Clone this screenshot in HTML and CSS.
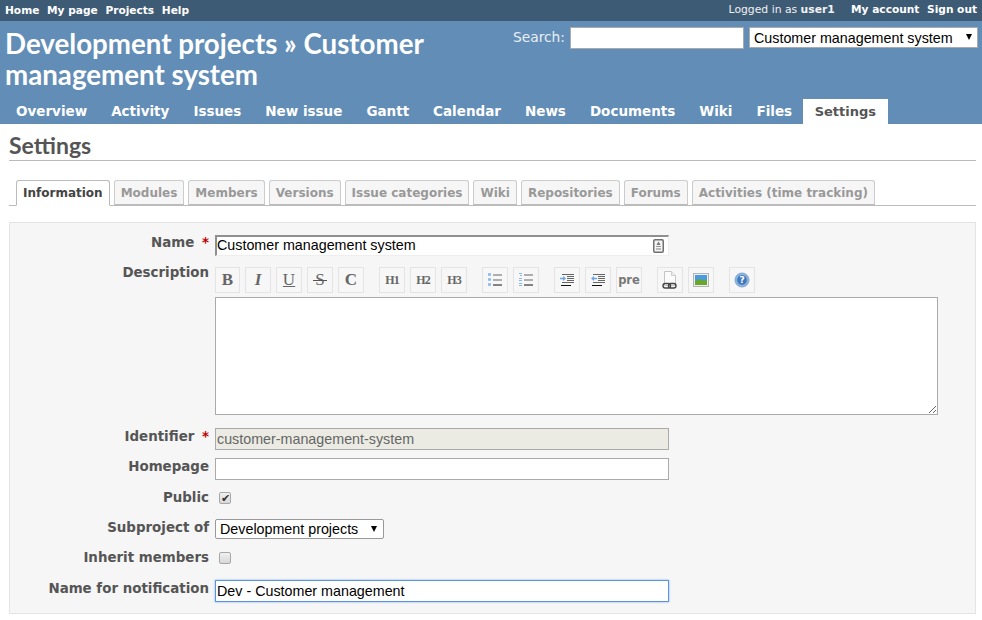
FILE: index.html
```html
<!DOCTYPE html>
<html>

<head>
    <title>Settings - Customer management system</title>
    <link rel="stylesheet" href="styles.css">
</head>

<body>
    <div id="top-menu">
        <div class="top-links">
            <a>Home</a>
            <a>My page</a>
            <a>Projects</a>
            <a>Help</a>
        </div>
        <div class="top-links">
            <span class="logged">Logged in as <b>user1</b></span>
            <a>My account</a>
            <a>Sign out</a>
        </div>
    </div>

    <div id="header">
        <div id="header-top">
            <h1 id="title">Development projects » Customer management system</h1>
            <div id="quick-search">
                <label>Search:</label>
                <input type="text" class="search-input" />
                <div class="select-wrap project-jump">
                    <select>
                        <option>Customer management system</option>
                    </select>
                </div>
            </div>
        </div>
        <div id="main-menu">
            <a>Overview</a>
            <a>Activity</a>
            <a>Issues</a>
            <a>New issue</a>
            <a>Gantt</a>
            <a>Calendar</a>
            <a>News</a>
            <a>Documents</a>
            <a>Wiki</a>
            <a>Files</a>
            <a class="selected">Settings</a>
        </div>
    </div>

    <div id="content">
        <h2>Settings</h2>

        <div class="tabs">
            <a class="selected">Information</a>
            <a>Modules</a>
            <a>Members</a>
            <a>Versions</a>
            <a>Issue categories</a>
            <a>Wiki</a>
            <a>Repositories</a>
            <a>Forums</a>
            <a>Activities (time tracking)</a>
        </div>

        <div class="box">
            <div class="row row-name">
                <label>Name <span class="required">*</span></label>
                <div class="name-wrap">
                    <input type="text" class="field inset" value="Customer management system" />
                    <svg class="field-icon" width="11" height="14" viewBox="0 0 11 14">
                        <rect x="0.75" y="0.75" width="9.5" height="12.5" rx="1.2" fill="#f4f4f4" stroke="#707070" stroke-width="1.5" />
                        <path d="M5.5 2.5 L7.5 6 H3.5 Z" fill="#777" />
                        <rect x="3" y="7" width="5" height="1" fill="#999" />
                        <rect x="3" y="9" width="5" height="2" fill="#bbb" />
                    </svg>
                </div>
            </div>

            <div class="row row-desc">
                <label>Description</label>
                <div class="editor">
                    <div class="toolbar">
                        <div class="tool-group">
                            <button class="tool tool-first serif"><b>B</b></button>
                            <button class="tool serif"><b><i>I</i></b></button>
                            <button class="tool serif under">U</button>
                            <button class="tool serif strike">S</button>
                            <button class="tool serif"><b>C</b></button>
                        </div>
                        <div class="tool-group">
                            <button class="tool serif small">H1</button>
                            <button class="tool serif small">H2</button>
                            <button class="tool serif small">H3</button>
                        </div>
                        <div class="tool-group">
                            <button class="tool">
                                <svg width="16" height="16" viewBox="0 0 16 16">
                                    <path d="M1 2.5h3M1 7.5h3M1 12.5h3" stroke="#8ab8ee" stroke-width="2.4" />
                                    <path d="M6 3h9" stroke="#666" />
                                    <path d="M6 8h9" stroke="#666" />
                                    <path d="M6 13h9" stroke="#111" />
                                </svg>
                            </button>
                            <button class="tool">
                                <svg width="16" height="16" viewBox="0 0 16 16">
                                    <path d="M1 1h3v1H1zM2 3h2v1H2zM1 6h3v1H1zM1 8h3v1H1zM1 11h3v1H1zM1 13h3v1H1z" fill="#8ab8ee" />
                                    <path d="M6 3h9" stroke="#666" />
                                    <path d="M6 8h9" stroke="#666" />
                                    <path d="M6 13h9" stroke="#111" />
                                </svg>
                            </button>
                        </div>
                        <div class="tool-group">
                            <button class="tool">
                                <svg width="16" height="16" viewBox="0 0 16 16">
                                    <path d="M3 2.5h12M8 4.5h7M8 6.5h7M8 8.5h7M3 10.5h12" stroke="#666" />
                                    <path d="M2 13.5h10" stroke="#111" />
                                    <path d="M1 6.5h3" stroke="#6aa6e6" stroke-width="1.5" />
                                    <path d="M4 4 L7 6.5 L4 9 Z" fill="#6aa6e6" />
                                </svg>
                            </button>
                            <button class="tool">
                                <svg width="16" height="16" viewBox="0 0 16 16">
                                    <path d="M3 2.5h12M8 4.5h7M8 6.5h7M8 8.5h7M3 10.5h12" stroke="#666" />
                                    <path d="M2 13.5h10" stroke="#111" />
                                    <path d="M4 6.5h3" stroke="#6aa6e6" stroke-width="1.5" />
                                    <path d="M4 4 L1 6.5 L4 9 Z" fill="#6aa6e6" />
                                </svg>
                            </button>
                            <button class="tool pre">pre</button>
                        </div>
                        <div class="tool-group">
                            <button class="tool">
                                <svg width="18" height="20" viewBox="0 0 18 20">
                                    <path d="M3.5 1.5h7l4 4v10h-11z" fill="#fbfbfb" stroke="#c4c4c4" />
                                    <path d="M10.5 1.5v4h4" fill="#eee" stroke="#d0d0d0" />
                                    <rect x="2" y="13.5" width="7.5" height="4.5" rx="2.2" fill="none" stroke="#444" stroke-width="1.4" />
                                    <rect x="7.5" y="13.5" width="7.5" height="4.5" rx="2.2" fill="none" stroke="#444" stroke-width="1.4" />
                                </svg>
                            </button>
                            <button class="tool">
                                <svg width="16" height="14" viewBox="0 0 16 14">
                                    <rect x="0.5" y="0.5" width="15" height="13" fill="#eee" stroke="#b4b4b4" />
                                    <rect x="2" y="2" width="12" height="10" fill="#4a9ade" />
                                    <path d="M2 8 Q6 5 9 7 T14 6 V12 H2 Z" fill="#6aa62a" />
                                </svg>
                            </button>
                        </div>
                        <div class="tool-group">
                            <button class="tool help">
                                <svg width="16" height="16" viewBox="0 0 16 16">
                                    <circle cx="8" cy="8" r="7" fill="#8db2e0" stroke="#86a6d0" />
                                    <circle cx="8" cy="8" r="4.8" fill="#3f78bd" />
                                    <text x="8" y="11" class="help-mark">?</text>
                                </svg>
                            </button>
                        </div>
                    </div>
                    <textarea class="desc-text"></textarea>
                </div>
            </div>

            <div class="row row-ident">
                <label>Identifier <span class="required">*</span></label>
                <input type="text" class="field disabled" value="customer-management-system" />
            </div>

            <div class="row row-home">
                <label>Homepage</label>
                <input type="text" class="field" />
            </div>

            <div class="row row-public">
                <label>Public</label>
                <input type="checkbox" class="check" checked />
            </div>

            <div class="row row-parent">
                <label>Subproject of</label>
                <div class="select-wrap parent-select">
                    <select>
                        <option>Development projects</option>
                    </select>
                </div>
            </div>

            <div class="row row-inherit">
                <label>Inherit members</label>
                <input type="checkbox" class="check" />
            </div>

            <div class="row row-notify">
                <label>Name for notification</label>
                <input type="text" class="field focused" value="Dev - Customer management" />
            </div>
        </div>
    </div>
</body>

</html>
```
FILE: styles.css
```css
body {
    font-family: "DejaVu Sans", Verdana, sans-serif;
    font-size: 12px;
    margin: 0;
    padding: 0;
    background-color: white;
    color: #484848;
    overflow: hidden;
}

a {
    cursor: pointer;
}

#top-menu {
    height: 21px;
    display: flex;
    justify-content: space-between;
    align-items: center;
    padding: 0 5px 2px 5px;
    background-color: #3e5b76;
    color: white;
    font-size: 10.6px;
    box-sizing: border-box;
}

.top-links {
    display: flex;
    gap: 7.7px;
}

.top-links a {
    font-weight: bold;
}

.logged {
    margin-right: 8.5px;
    font-size: 10.8px;
    color: #f0f0f0;
}

#header {
    height: 103px;
    display: flex;
    flex-direction: column;
    justify-content: space-between;
    background-color: #628db6;
    color: white;
}

#header-top {
    display: flex;
    justify-content: space-between;
    padding: 6px 4px 0 5px;
}

#title {
    margin: 1px 0 0 0;
    width: 440px;
    font-family: Lato, "Liberation Sans", sans-serif;
    font-size: 27.7px;
    font-weight: 700;
    line-height: 31px;
}

#quick-search {
    display: flex;
    align-items: flex-start;
    font-size: 13.8px;
    color: #e8eef5;
}

#quick-search label {
    margin-top: 2px;
    margin-right: 5px;
}

.search-input {
    width: 174px;
    height: 22px;
    box-sizing: border-box;
    margin: 0 5px 0 0;
    border: 1px solid #aaa;
    background-color: white;
}

.select-wrap {
    position: relative;
    display: block;
}

.select-wrap select {
    display: block;
    width: 100%;
    height: 100%;
    box-sizing: border-box;
    padding: 0 0 0 4px;
    appearance: none;
    background-color: white;
    border: 1px solid #aaa;
    border-radius: 0;
    font-family: "Liberation Sans", Arial, sans-serif;
    font-size: 14.3px;
    color: black;
}

.select-wrap::after {
    content: "";
    position: absolute;
    right: 6px;
    top: 7px;
    border-left: 3px solid transparent;
    border-right: 3px solid transparent;
    border-top: 6px solid black;
}

.project-jump {
    width: 229px;
    height: 21px;
}

#main-menu {
    display: flex;
    height: 25px;
    padding-left: 4px;
    font-size: 13.5px;
    font-weight: bold;
}

#main-menu a {
    padding: 4px 12px 0 12px;
    box-sizing: border-box;
}

#main-menu a.selected {
    margin-left: -1px;
    padding: 5px 11.5px 0 11.5px;
    background-color: white;
    font-size: 13px;
    color: #555;
}

#content {
    padding: 0 6px 0 9px;
}

h2 {
    margin: 0;
    padding-top: 9px;
    height: 37px;
    box-sizing: border-box;
    border-bottom: 1px solid #bbb;
    font-family: Lato, "Liberation Sans", sans-serif;
    font-size: 23px;
    font-weight: 700;
    line-height: 24px;
    color: #555;
}

.tabs {
    display: flex;
    gap: 4px;
    height: 26px;
    box-sizing: border-box;
    margin-top: 19px;
    padding-left: 7px;
    border-bottom: 1px solid #bbb;
}

.tabs a {
    height: 25px;
    box-sizing: border-box;
    padding: 5px 6px 0 6px;
    background-color: #f6f6f6;
    border: 1px solid #ccc;
    border-bottom: 1px solid #bbb;
    border-radius: 3px 3px 0 0;
    font-size: 12px;
    font-weight: bold;
    color: #999;
}

.tabs a.selected {
    height: 26px;
    background-color: white;
    border-color: #bbb;
    border-bottom-color: white;
    color: #444;
}

.box {
    margin-top: 16px;
    height: 392px;
    box-sizing: border-box;
    padding-top: 12px;
    background-color: #f6f6f6;
    border: 1px solid #e4e4e4;
}

.row {
    display: flex;
    align-items: flex-start;
}

.row label {
    width: 199px;
    flex-shrink: 0;
    margin-right: 6px;
    text-align: right;
    font-size: 13.4px;
    font-weight: bold;
    color: #555;
    line-height: 16px;
}

.required {
    color: #bb0000;
    margin-left: 3px;
}

.field {
    display: block;
    width: 454px;
    height: 22px;
    box-sizing: border-box;
    margin: 0;
    padding: 0 1px;
    background-color: white;
    border: 1px solid #aaa;
    font-family: "Liberation Sans", Arial, sans-serif;
    font-size: 14.3px;
    color: black;
    outline: none;
}

.inset {
    height: 21px;
    padding: 0 0 2px 0;
    border-style: solid;
    border-width: 2px 1px 1px 2px;
    border-color: #8f8f8f #eeeeee #eeeeee #8f8f8f;
}

.disabled {
    background-color: #ebebe4;
    color: #666;
}

.focused {
    border-color: #5a94dc;
    box-shadow: 0 0 2px #7fb0ea;
}

.name-wrap {
    position: relative;
}

.field-icon {
    position: absolute;
    right: 5px;
    top: 4px;
}

.row-desc {
    margin-top: 11px;
}

.row-desc label {
    margin-top: -2px;
}

.row-ident {
    margin-top: 13px;
}

.row-home {
    margin-top: 8px;
}

.row-public {
    margin-top: 10px;
}

.row-parent {
    margin-top: 13px;
}

.row-inherit {
    margin-top: 11px;
}

.row-notify {
    margin-top: 14px;
}

.row-ident label,
.row-home label,
.row-parent label,
.row-notify label {
    margin-top: 1px;
}

.toolbar {
    display: flex;
    gap: 15px;
    height: 26px;
    margin-bottom: 4px;
}

.tool-group {
    display: flex;
    gap: 5px;
}

.tool {
    display: flex;
    align-items: center;
    justify-content: center;
    width: 26px;
    height: 26px;
    box-sizing: border-box;
    padding: 0;
    background-color: #f7f7f7;
    border: 1px solid #e4e4e4;
    color: #666;
}

.tool-first {
    width: 25px;
}

.serif {
    font-family: "Liberation Serif", "Times New Roman", serif;
    font-size: 17px;
}

.small {
    font-size: 12px;
    font-weight: bold;
    letter-spacing: -1px;
}

.under {
    text-decoration: underline;
}

.strike {
    position: relative;
}

.strike::after {
    content: "";
    position: absolute;
    left: 5px;
    right: 5px;
    top: 12px;
    height: 1px;
    background-color: #555;
}

.pre {
    font-family: "DejaVu Sans", sans-serif;
    font-size: 11.5px;
    font-weight: bold;
    color: #777;
}

.help-mark {
    font-family: "DejaVu Sans", sans-serif;
    font-size: 9px;
    font-weight: bold;
    fill: white;
    text-anchor: middle;
}

.desc-text {
    display: block;
    width: 723px;
    height: 118px;
    box-sizing: border-box;
    margin: 0;
    background-color: white;
    border: 1px solid #aaa;
}

.parent-select {
    width: 169px;
    height: 20px;
}

.parent-select select {
    border-radius: 2px;
    border-color: #999;
}

.parent-select::after {
    right: 7px;
}

.check {
    appearance: none;
    display: flex;
    align-items: center;
    justify-content: center;
    width: 12px;
    height: 12px;
    box-sizing: border-box;
    margin: 2px 0 0 4px;
    background: linear-gradient(#f0f0f0, #d8d8d8);
    border: 1px solid #a8a8a8;
    border-radius: 2px;
}

.check:checked::before {
    content: "✔";
    font-size: 11px;
    line-height: 10px;
    color: #333;
}
```
